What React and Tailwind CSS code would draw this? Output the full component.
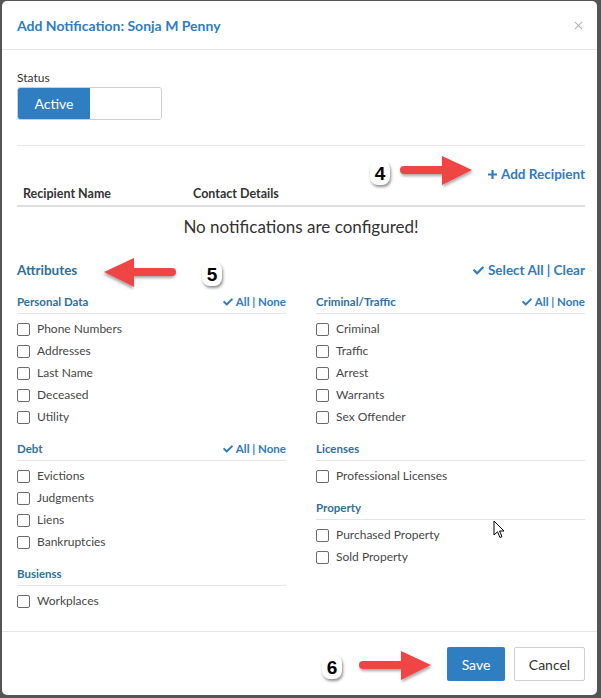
import { useState } from 'react'

const FONT = { fontFamily: 'Lato, "Open Sans", sans-serif' }

const LEFT = [
  { title: 'Personal Data', all: true, items: ['Phone Numbers', 'Addresses', 'Last Name', 'Deceased', 'Utility'] },
  { title: 'Debt', all: true, items: ['Evictions', 'Judgments', 'Liens', 'Bankruptcies'] },
  { title: 'Busienss', all: false, items: ['Workplaces'] },
]
const RIGHT = [
  { title: 'Criminal/Traffic', all: true, items: ['Criminal', 'Traffic', 'Arrest', 'Warrants', 'Sex Offender'] },
  { title: 'Licenses', all: false, items: ['Professional Licenses'] },
  { title: 'Property', all: false, items: ['Purchased Property', 'Sold Property'] },
]

function CheckIcon({ className }) {
  return (
    <svg viewBox="0 0 512 512" className={className} fill="currentColor">
      <path d="M173.9 439.4l-166.4-166.4c-10-10-10-26.2 0-36.2l36.2-36.2c10-10 26.2-10 36.2 0L192 312.7 432.1 72.6c10-10 26.2-10 36.2 0l36.2 36.2c10 10 10 26.2 0 36.2l-294.4 294.4c-10 10-26.2 10-36.2 0z" />
    </svg>
  )
}

function Arrow({ dir = 'right', className }) {
  // red annotation arrow, drawn pointing right then mirrored if needed
  return (
    <svg viewBox="0 0 80 34" className={className} style={dir === 'left' ? { transform: 'scaleX(-1)' } : undefined}>
      <defs>
        <filter id={'sh' + dir} x="-20%" y="-30%" width="140%" height="160%">
          <feDropShadow dx="1" dy="2" stdDeviation="1.5" floodColor="#000" floodOpacity="0.35" />
        </filter>
      </defs>
      <g filter={'url(#sh' + dir + ')'}>
        <line x1="6" y1="16" x2="50" y2="16" stroke="#f04545" strokeWidth="8" strokeLinecap="round" />
        <path d="M44 2 L74 16 L44 31 Z" fill="#f04545" />
      </g>
    </svg>
  )
}

function Badge({ n, className }) {
  return (
    <div className={'absolute flex items-center justify-center w-[20px] h-[24px] rounded-[8px] bg-white shadow-[1px_2px_3px_rgba(0,0,0,0.45)] ' + className}>
      <span className="text-[19px] font-bold text-black leading-none" style={{ fontFamily: '"Liberation Sans", Arial, sans-serif' }}>{n}</span>
    </div>
  )
}

function Section({ s, checked, toggle, first }) {
  return (
    <div className={first ? '' : 'mt-[12px]'}>
      <div className="h-[21px] flex items-start justify-between border-b border-[#e3e3e3]">
        <span className="text-[11.5px] font-bold text-[#31709a] leading-[18px]">{s.title}</span>
        {s.all && (
          <span className="flex items-center gap-[3px] text-[11.5px] font-bold text-[#2f7bbf] leading-[18px]">
            <CheckIcon className="w-[10px] h-[10px]" />
            All | None
          </span>
        )}
      </div>
      <div className="pt-[4px]">
        {s.items.map(it => (
          <label key={it} className="h-[22px] flex items-center gap-[7px] cursor-pointer">
            <span
              onClick={() => toggle(it)}
              className={'w-[13px] h-[13px] rounded-[2px] border border-[#6b6b6b] flex items-center justify-center ' + (checked[it] ? 'bg-[#2f7ec2] border-[#2f7ec2]' : 'bg-white')}
            >
              {checked[it] && <CheckIcon className="w-[8px] h-[8px] text-white" />}
            </span>
            <span className="text-[12px] text-[#474747]">{it}</span>
          </label>
        ))}
      </div>
    </div>
  )
}

export default function App() {
  const [active, setActive] = useState(true)
  const [checked, setChecked] = useState({})
  const toggle = (k) => setChecked(c => ({ ...c, [k]: !c[k] }))

  return (
    <div className="w-[601px] h-[698px] bg-[#555] pt-[1px] pl-[2px] pr-[4px] pb-[3px]" style={FONT}>
      <div className="relative bg-white rounded-[5px] h-full flex flex-col overflow-hidden">
        {/* Header */}
        <div className="h-[49px] flex items-center justify-between pl-[15px] pr-[14px] border-b border-[#e5e5e5]">
          <h4 className="text-[14px] font-bold text-[#2f7dc0]">Add Notification: Sonja M Penny</h4>
          <svg viewBox="0 0 10 10" className="w-[9px] h-[9px]" stroke="#b5b5b5" strokeWidth="1.4">
            <line x1="1" y1="1" x2="9" y2="9" />
            <line x1="9" y1="1" x2="1" y2="9" />
          </svg>
        </div>

        {/* Body */}
        <div className="flex-1 pl-[15px] pr-[12px]">
          <div className="mt-[20px] text-[12px] leading-[16px] text-[#333]">Status</div>
          <button
            onClick={() => setActive(a => !a)}
            className="mt-[1px] w-[145px] h-[33px] rounded-[3px] border border-[#cfcfcf] flex overflow-hidden"
          >
            <span className={'w-[72px] h-full flex items-center justify-center text-[14px] ' + (active ? 'bg-[#2f7ec2] text-white' : 'bg-white text-[#333]')}>
              {active ? 'Active' : ''}
            </span>
            <span className={'flex-1 h-full flex items-center justify-center text-[14px] ' + (active ? 'bg-white' : 'bg-[#ddd] text-[#333]')}>
              {active ? '' : 'Inactive'}
            </span>
          </button>

          <div className="mt-[25px] border-t border-[#e8e8e8]" />

          <div className="mt-[18px] h-[20px] flex items-center justify-end">
            <span className="flex items-center gap-[4px] text-[13.5px] font-bold text-[#2f7bbf]">
              <svg viewBox="0 0 10 10" className="w-[9px] h-[9px]" stroke="currentColor" strokeWidth="2.4">
                <line x1="5" y1="0" x2="5" y2="10" />
                <line x1="0" y1="5" x2="10" y2="5" />
              </svg>
              Add Recipient
            </span>
          </div>

          <div className="h-[23px] flex items-start border-b-2 border-[#dedede] text-[12.5px] font-bold text-[#333] leading-[20px]">
            <span className="w-[176px] pl-[6px]">Recipient Name</span>
            <span>Contact Details</span>
          </div>
          <div className="mt-[9px] text-center text-[17px] leading-[22px] text-[#333]">No notifications are configured!</div>

          <div className="mt-[22px] h-[20px] flex items-center justify-between">
            <span className="text-[13.5px] font-bold text-[#2e6f9c]">Attributes</span>
            <span className="flex items-center gap-[4px] text-[13.5px] font-bold text-[#2f7bbf]">
              <CheckIcon className="w-[11px] h-[11px]" />
              Select All | Clear
            </span>
          </div>

          <div className="mt-[13px] grid grid-cols-2 gap-x-[30px]">
            <div>
              {LEFT.map((s, i) => <Section key={s.title} s={s} first={i === 0} checked={checked} toggle={toggle} />)}
            </div>
            <div>
              {RIGHT.map((s, i) => (
                <Section key={s.title} s={s} first={i === 0} checked={checked} toggle={toggle} />
              ))}
            </div>
          </div>
        </div>

        {/* Footer */}
        <div className="h-[64px] border-t border-[#e5e5e5] flex items-start justify-end gap-[9px] pt-[15px] pr-[12px]">
          <button className="w-[58px] h-[34px] bg-[#2f7ec2] text-white text-[14px] rounded-[2px]">Save</button>
          <button className="w-[71px] h-[34px] bg-white border border-[#cfcfcf] text-[#333] text-[14px] rounded-[2px]">Cancel</button>
        </div>

        {/* annotations */}
        <Badge n="4" className="left-[368px] top-[160px]" />
        <Arrow className="absolute left-[396px] top-[153px] w-[80px] h-[34px]" />
        <Badge n="5" className="left-[200px] top-[261px]" />
        <Arrow dir="left" className="absolute left-[96px] top-[255px] w-[80px] h-[34px]" />
        <Badge n="6" className="left-[320px] top-[654px]" />
        <Arrow className="absolute left-[352px] top-[648px] w-[86px] h-[34px]" />

        {/* mouse cursor */}
        <svg viewBox="0 0 12 19" className="absolute left-[491px] top-[519px] w-[12px] h-[19px]">
          <path d="M1 1 L1 15 L4.5 11.8 L7 17.5 L9 16.6 L6.6 11 L11 11 Z" fill="white" stroke="black" strokeWidth="1" strokeLinejoin="round" />
        </svg>
      </div>
    </div>
  )
}
